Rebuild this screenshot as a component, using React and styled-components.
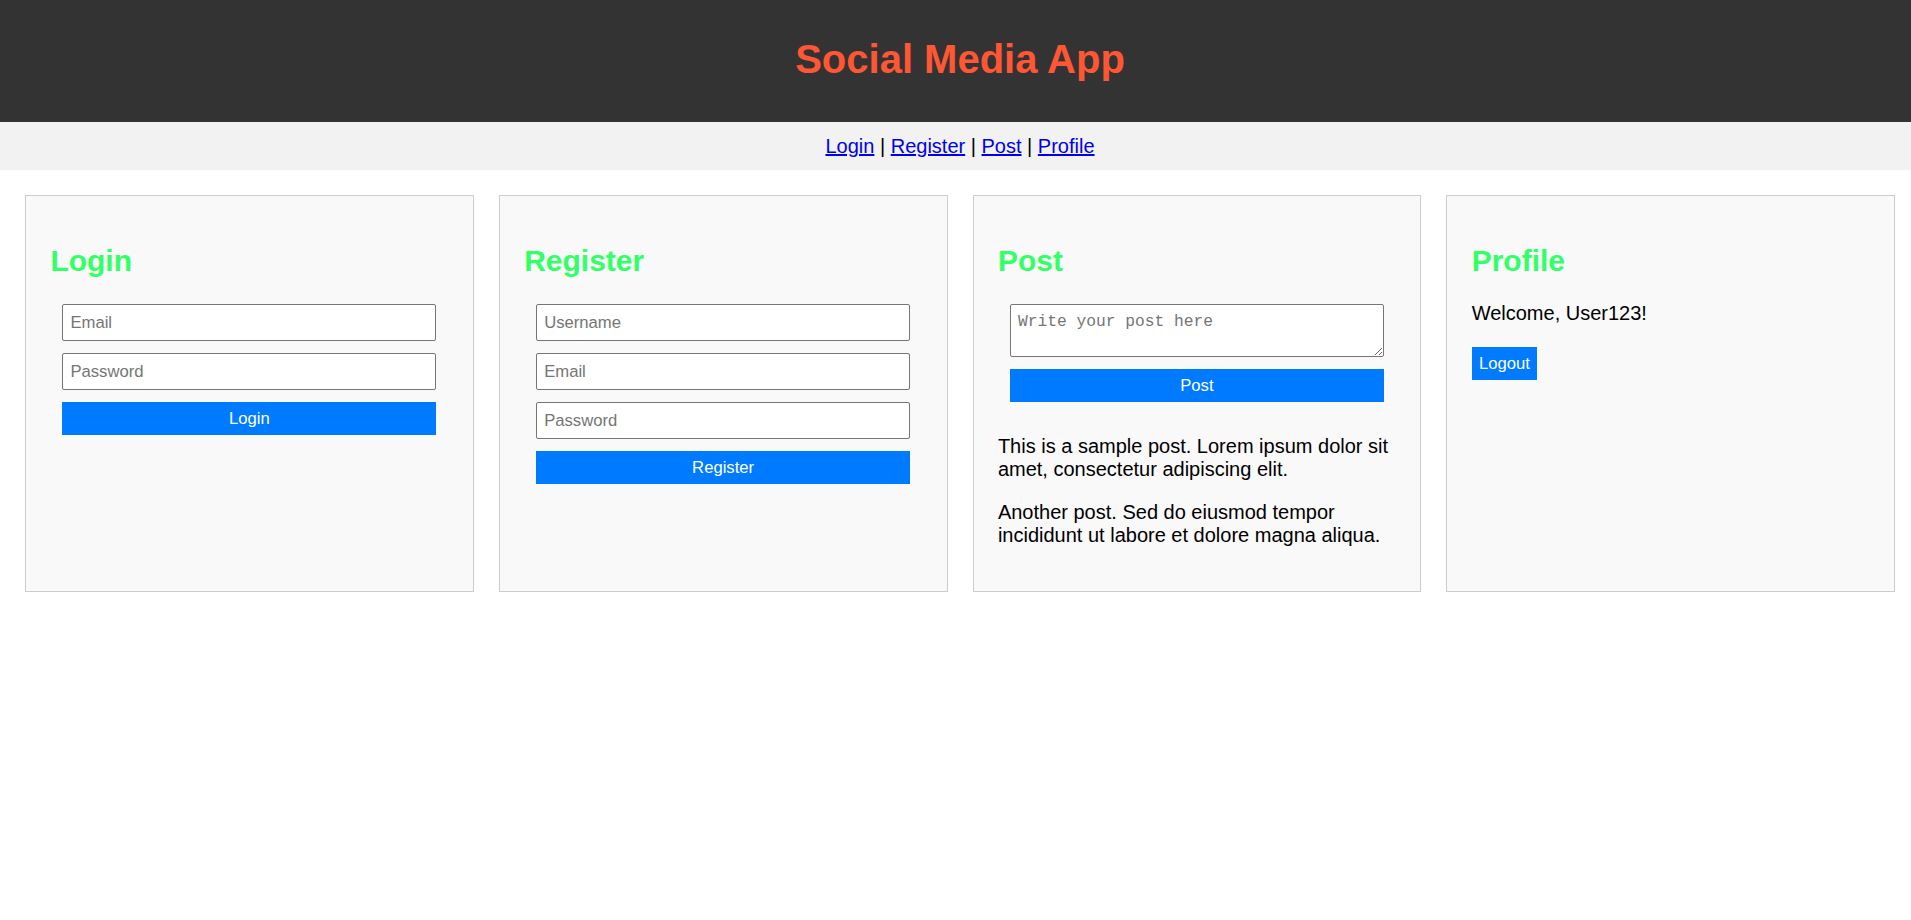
import React from "react";
import styled, { createGlobalStyle } from "styled-components";

const GlobalStyle = createGlobalStyle`
  html, body {
    margin: 0;
    padding: 0;
    background: #ffffff;
    font-family: "Liberation Sans", Arial, sans-serif;
    color: #000000;
    overflow-x: hidden;
  }
  * { box-sizing: border-box; }
`;

const Page = styled.div`
  width: 1920px;
`;

const Header = styled.header`
  height: 122px;
  background: #333333;
  padding-top: 37px;
  text-align: center;
`;

const Title = styled.h1`
  margin: 0;
  font-size: 40px;
  font-weight: 700;
  color: #ff5733;
  line-height: normal;
`;

const Nav = styled.nav`
  height: 48px;
  background: #f2f2f2;
  padding: 12px 0;
  text-align: center;
  font-size: 20px;
  line-height: 24px;
`;

const NavLink = styled.a`
  color: #0000ee;
  text-decoration: underline;
`;

const Grid = styled.main`
  display: grid;
  grid-template-columns: repeat(4, 1fr);
  gap: 25px;
  padding: 25px;
`;

const Card = styled.section`
  min-height: 397px;
  background: #f9f9f9;
  border: 1px solid #cccccc;
  padding: 24.4px;
`;

const CardTitle = styled.h2`
  margin: 24px 0 0;
  font-size: 30px;
  font-weight: 700;
  line-height: normal;
  color: #33ff66;
`;

const Form = styled.form`
  display: flex;
  flex-direction: column;
  gap: ${(p) => p.$gap || 12.6}px;
  padding: 0 12px;
  margin-top: 26px;
`;

const Input = styled.input`
  width: 100%;
  height: 36.4px;
  padding: 0 7px;
  border: 1px solid #767676;
  border-radius: 2px;
  background: #ffffff;
  font-family: "Liberation Sans", Arial, sans-serif;
  font-size: 16.67px;
  color: #000;
  &::placeholder { color: #757575; }
`;

const TextArea = styled.textarea`
  display: block;
  width: 100%;
  height: 52.4px;
  padding: 7px;
  border: 1px solid #767676;
  border-radius: 2px;
  background: #ffffff;
  font-family: "Liberation Mono", "Courier New", monospace;
  font-size: 16.25px;
  line-height: normal;
  &::placeholder { color: #757575; }
`;

const Button = styled.button`
  display: block;
  width: ${(p) => (p.$inline ? "auto" : "100%")};
  height: 33px;
  padding: 0 7.3px;
  border: none;
  background: #007bff;
  color: #ffffff;
  font-family: "Liberation Sans", Arial, sans-serif;
  font-size: 16.67px;
  line-height: 33px;
  cursor: pointer;
`;

const Posts = styled.div`
  margin-top: 33px;
`;

const Text = styled.p`
  margin: ${(p) => p.$mt ?? 0}px 0 0;
  font-size: 20px;
  line-height: normal;
`;

const LogoutWrap = styled.div`
  margin-top: 22px;
`;

export default function App() {
  return (
    <Page>
      <GlobalStyle />
      <Header>
        <Title>Social Media App</Title>
      </Header>
      <Nav>
        <NavLink href="#login">Login</NavLink> | <NavLink href="#register">Register</NavLink> |{" "}
        <NavLink href="#post">Post</NavLink> | <NavLink href="#profile">Profile</NavLink>
      </Nav>
      <Grid>
        <Card id="login">
          <CardTitle>Login</CardTitle>
          <Form onSubmit={(e) => e.preventDefault()}>
            <Input type="email" placeholder="Email" />
            <Input type="password" placeholder="Password" />
            <Button type="submit">Login</Button>
          </Form>
        </Card>
        <Card id="register">
          <CardTitle>Register</CardTitle>
          <Form onSubmit={(e) => e.preventDefault()}>
            <Input type="text" placeholder="Username" />
            <Input type="email" placeholder="Email" />
            <Input type="password" placeholder="Password" />
            <Button type="submit">Register</Button>
          </Form>
        </Card>
        <Card id="post">
          <CardTitle>Post</CardTitle>
          <Form $gap={12.3} onSubmit={(e) => e.preventDefault()}>
            <TextArea placeholder="Write your post here" />
            <Button type="submit">Post</Button>
          </Form>
          <Posts>
            <Text>This is a sample post. Lorem ipsum dolor sit amet, consectetur adipiscing elit.</Text>
            <Text $mt={19.5}>Another post. Sed do eiusmod tempor incididunt ut labore et dolore magna aliqua.</Text>
          </Posts>
        </Card>
        <Card id="profile">
          <CardTitle>Profile</CardTitle>
          <Text $mt={24}>Welcome, User123!</Text>
          <LogoutWrap>
            <Button $inline type="button">Logout</Button>
          </LogoutWrap>
        </Card>
      </Grid>
    </Page>
  );
}
